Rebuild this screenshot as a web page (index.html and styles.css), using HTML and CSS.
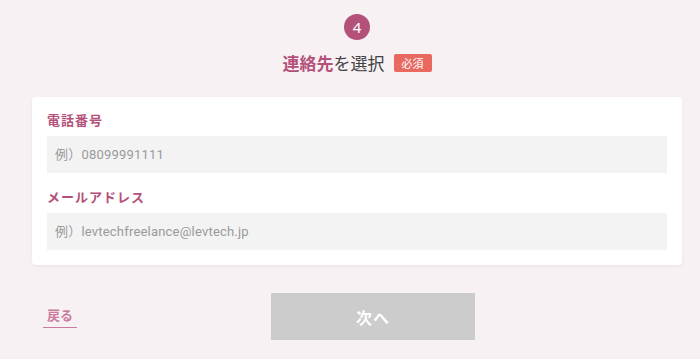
FILE: index.html
```html
<!DOCTYPE html>
<html lang="ja">
<head>
    <meta charset="utf-8">
    <meta name="viewport" content="width=device-width, initial-scale=1">
    <link rel="stylesheet" href="styles.css">
    <title>連絡先を選択</title>
</head>
<body>
    <div class="page">
        <div class="step">
            <div class="step-num">4</div>
            <h2 class="step-title"><span class="accent">連絡先</span>を選択<span class="badge">必須</span></h2>
        </div>
        <div class="card">
            <label class="field">
                <span class="label">電話番号</span>
                <input class="input" type="tel" placeholder="例）08099991111">
            </label>
            <label class="field">
                <span class="label">メールアドレス</span>
                <input class="input" type="email" placeholder="例）levtechfreelance@levtech.jp">
            </label>
        </div>
        <div class="actions">
            <a class="back" href="#">戻る</a>
            <button class="next" disabled>次へ</button>
        </div>
    </div>
</body>
</html>
```

FILE: styles.css
```css
* { margin: 0; padding: 0; box-sizing: border-box; }
html, body { height: 100%; width: 100%; }
body { background: #f8f1f4; font-family: "Noto Sans CJK JP", "Noto Sans", sans-serif; color: #333; }
.page { width: 650px; margin-left: 32px; padding-top: 14px; }
.step { display: flex; flex-direction: column; align-items: center; }
.step-num { width: 26px; height: 26px; border-radius: 50%; background: #b4517b; color: #fff; font-size: 15px; line-height: 26px; text-align: center; font-family: "Noto Sans", sans-serif; }
.step-title { margin-top: 10px; display: flex; align-items: center; font-size: 17px; font-weight: normal; color: #444; line-height: 26px; }
.accent { color: #b4517b; font-weight: bold; }
.badge { margin-left: 9px; background: #e9685f; color: #fff; font-size: 11px; line-height: 18px; padding: 0 8px; border-radius: 2px; }
.card { margin-top: 21px; background: #fff; border-radius: 4px; box-shadow: 0 1px 3px rgba(160, 110, 130, 0.12); padding: 13px 15px 15px; display: flex; flex-direction: column; gap: 14px; }
.field { display: flex; flex-direction: column; }
.label { color: #b4517b; font-size: 13px; font-weight: bold; letter-spacing: 1px; line-height: 20px; margin-bottom: 6px; }
.input { height: 37px; border: none; background: #f3f3f3; padding: 0 8px; font-size: 13px; letter-spacing: 0.2px; font-family: Roboto, "Noto Sans CJK JP", sans-serif; color: #333; outline: none; }
.input::placeholder { color: #9a9a9a; }
.actions { margin-top: 28px; display: flex; align-items: center; }
.back { margin-left: 11px; color: #c97c9e; font-size: 13px; font-weight: bold; text-decoration: none; padding: 0 4px 2px; border-bottom: 1px solid #c97c9e; line-height: 20px; }
.next { margin-left: 194px; width: 204px; height: 47px; border: none; background: #cccccc; color: #fff; font-size: 16px; font-weight: bold; font-family: inherit; letter-spacing: 1px; }
```
